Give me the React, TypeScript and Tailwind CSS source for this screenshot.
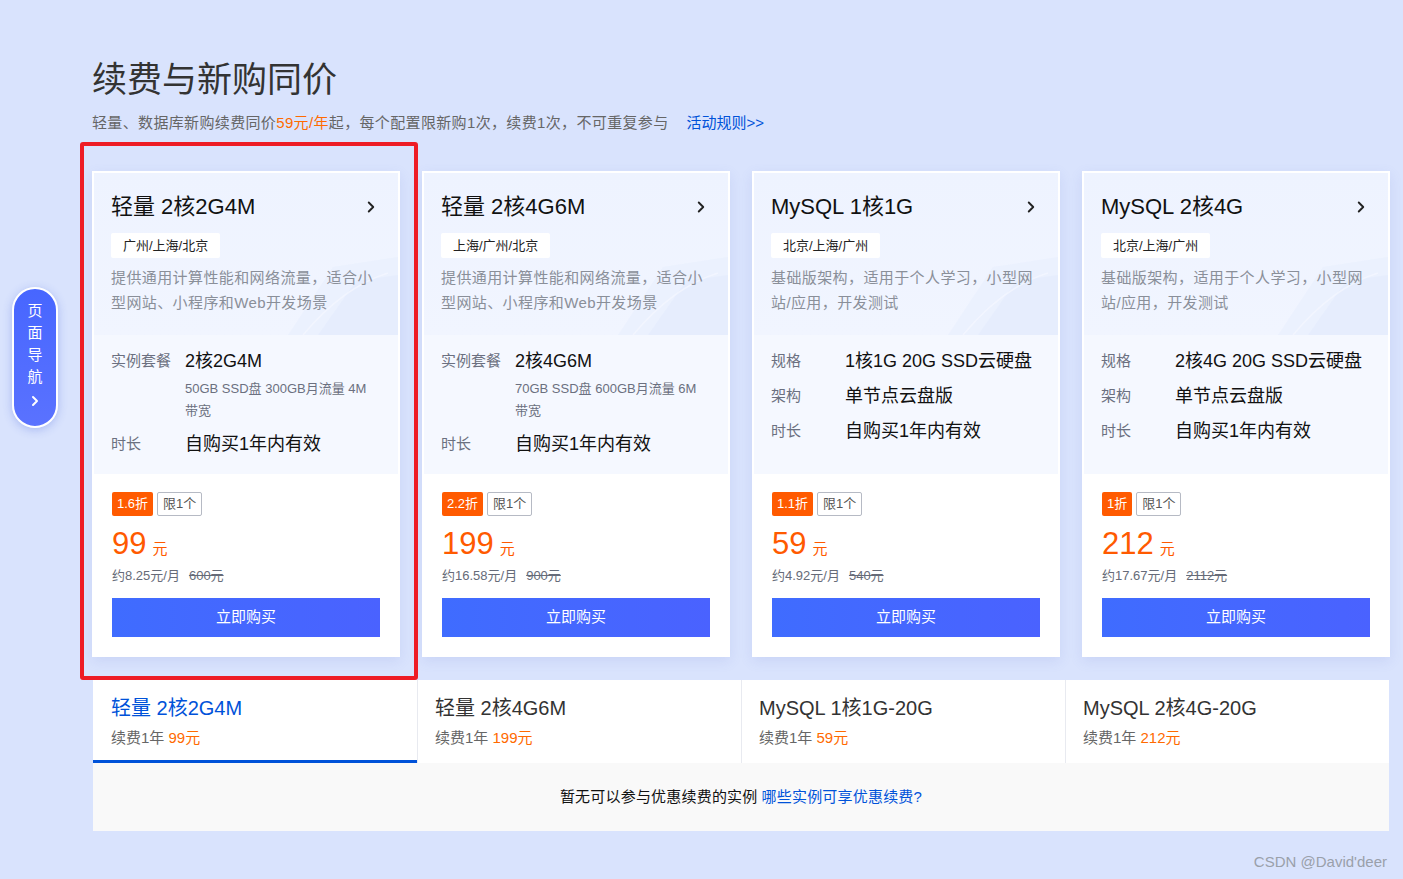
import { ChevronRight } from 'lucide-react';

type Row = { label: string; value: string; sub?: string };

interface Plan {
  name: string;
  regions: string;
  desc: string;
  rows: Row[];
  discount: string;
  price: string;
  monthly: string;
  original: string;
}

const plans: Plan[] = [
  {
    name: '轻量 2核2G4M',
    regions: '广州/上海/北京',
    desc: '提供通用计算性能和网络流量，适合小型网站、小程序和Web开发场景',
    rows: [
      { label: '实例套餐', value: '2核2G4M', sub: '50GB SSD盘 300GB月流量 4M带宽' },
      { label: '时长', value: '自购买1年内有效' },
    ],
    discount: '1.6折',
    price: '99',
    monthly: '约8.25元/月',
    original: '600元',
  },
  {
    name: '轻量 2核4G6M',
    regions: '上海/广州/北京',
    desc: '提供通用计算性能和网络流量，适合小型网站、小程序和Web开发场景',
    rows: [
      { label: '实例套餐', value: '2核4G6M', sub: '70GB SSD盘 600GB月流量 6M带宽' },
      { label: '时长', value: '自购买1年内有效' },
    ],
    discount: '2.2折',
    price: '199',
    monthly: '约16.58元/月',
    original: '900元',
  },
  {
    name: 'MySQL 1核1G',
    regions: '北京/上海/广州',
    desc: '基础版架构，适用于个人学习，小型网站/应用，开发测试',
    rows: [
      { label: '规格', value: '1核1G 20G SSD云硬盘' },
      { label: '架构', value: '单节点云盘版' },
      { label: '时长', value: '自购买1年内有效' },
    ],
    discount: '1.1折',
    price: '59',
    monthly: '约4.92元/月',
    original: '540元',
  },
  {
    name: 'MySQL 2核4G',
    regions: '北京/上海/广州',
    desc: '基础版架构，适用于个人学习，小型网站/应用，开发测试',
    rows: [
      { label: '规格', value: '2核4G 20G SSD云硬盘' },
      { label: '架构', value: '单节点云盘版' },
      { label: '时长', value: '自购买1年内有效' },
    ],
    discount: '1折',
    price: '212',
    monthly: '约17.67元/月',
    original: '2112元',
  },
];

const tabs = [
  { name: '轻量 2核2G4M', price: '99元' },
  { name: '轻量 2核4G6M', price: '199元' },
  { name: 'MySQL 1核1G-20G', price: '59元' },
  { name: 'MySQL 2核4G-20G', price: '212元' },
];

function PlanCard({ plan }: { plan: Plan }) {
  return (
    <div className="flex flex-col border-2 border-white bg-white shadow-[0_4px_12px_rgba(90,110,200,0.12)]">
      {/* Top section */}
      <div className="relative h-[162px] overflow-hidden bg-gradient-to-b from-[#eef3ff] to-[#f1f5ff] px-[17px] pt-[19px]">
        <svg className="absolute right-0 bottom-0" width="120" height="90" viewBox="0 0 120 90" fill="none">
          <path d="M10 90 L55 22 L120 12 L120 90 Z" fill="#e8eefd" opacity="0.6" />
          <path d="M40 90 L78 36 L120 30 L120 90 Z" fill="#e1e8fc" opacity="0.45" />
          <path d="M25 90 Q65 42 110 28" stroke="#f7f9ff" strokeWidth="1.5" opacity="0.6" />
        </svg>
        <div className="relative flex items-center justify-between">
          <div className="text-[22px] leading-[30px] text-[#111]">{plan.name}</div>
          <ChevronRight className="mr-[1px] h-[18px] w-[18px] text-[#222]" strokeWidth={2.5} />
        </div>
        <div className="relative mt-[11px] inline-flex h-[25px] items-center rounded-[2px] bg-white px-[12px] text-[13px] text-[#222]">
          {plan.regions}
        </div>
        <div className="relative mt-[7px] text-[15px] leading-[25px] tracking-[0.4px] text-[#8a8f99]">{plan.desc}</div>
      </div>

      {/* Spec section */}
      <div className="flex h-[139px] flex-col gap-[9px] bg-[#f5f8ff] px-[17px] pt-[13px]">
        {plan.rows.map((row) => (
          <div key={row.label} className="flex">
            <div className="w-[74px] shrink-0 text-[15px] leading-[26px] text-[#6b7080]">{row.label}</div>
            <div className="flex flex-col">
              <div className="text-[18px] leading-[26px] text-[#111]">{row.value}</div>
              {row.sub && (
                <div className="mt-[4px] pr-[8px] text-[13px] leading-[22px] text-[#6b7080]">{row.sub}</div>
              )}
            </div>
          </div>
        ))}
      </div>

      {/* Price section */}
      <div className="flex flex-col bg-white px-[18px] pt-[18px] pb-[18px]">
        <div className="flex items-center gap-[4px]">
          <span className="flex h-[24px] items-center rounded-[2px] bg-[#ff5a00] px-[5px] text-[13px] text-white">
            {plan.discount}
          </span>
          <span className="flex h-[24px] items-center rounded-[2px] border border-[#b6bac4] px-[5px] text-[13px] text-[#555]">
            限1个
          </span>
        </div>
        <div className="mt-[10px] flex items-baseline gap-[6px] text-[#ff5a00]">
          <span className="text-[31px] leading-[36px]">{plan.price}</span>
          <span className="text-[15px]">元</span>
        </div>
        <div className="mt-[4px] flex gap-[9px] text-[13px] leading-[20px] text-[#666b78]">
          <span>{plan.monthly}</span>
          <span className="line-through">{plan.original}</span>
        </div>
        <button className="mt-[12px] h-[39px] w-full bg-gradient-to-r from-[#3f6cff] to-[#4a62ff] text-[15px] text-white">
          立即购买
        </button>
      </div>
    </div>
  );
}

export default function App() {
  return (
    <div
      className="relative min-h-[879px] w-full bg-[#d9e3fd] pt-[55px] pl-[92px]"
      style={{ fontFamily: '"Liberation Sans", "Noto Sans CJK SC", sans-serif' }}
    >
      {/* Header */}
      <h1 className="text-[35px] leading-[50px] text-[#333]">续费与新购同价</h1>
      <p className="mt-[5px] flex text-[15px] leading-[26px] tracking-[0.35px] text-[#666]">
        <span>
          轻量、数据库新购续费同价<span className="text-[#ff6a00]">59元/年</span>起，每个配置限新购1次，续费1次，不可重复参与
        </span>
        <a className="ml-[18px] tracking-normal text-[#0052d9]">活动规则&gt;&gt;</a>
      </p>

      {/* Cards */}
      <div className="mt-[35px] grid w-[1298px] grid-cols-4 gap-[22px]">
        {plans.map((p) => (
          <PlanCard key={p.name} plan={p} />
        ))}
      </div>

      {/* Tabs */}
      <div className="mt-[23px] ml-[1px] w-[1296px]">
        <div className="grid grid-cols-4 bg-white">
          {tabs.map((t, i) => (
            <div
              key={t.name}
              className={
                i === 0
                  ? 'h-[83px] border-b-[3px] border-[#0052d9] pt-[13px] pl-[18px]'
                  : 'h-[83px] border-l border-[#e8eaf0] pt-[13px] pl-[17px]'
              }
            >
              <div className={i === 0 ? 'text-[20px] leading-[30px] text-[#0052d9]' : 'text-[20px] leading-[30px] text-[#333]'}>
                {t.name}
              </div>
              <div className="mt-[1px] text-[15px] leading-[28px] text-[#666]">
                续费1年 <span className="text-[#ff6a00]">{t.price}</span>
              </div>
            </div>
          ))}
        </div>
        <div className="flex h-[68px] items-center justify-center bg-[#f9f9f9] text-[15px] tracking-[0.2px] text-[#111]">
          暂无可以参与优惠续费的实例
          <a className="ml-[4px] text-[#0052d9]">哪些实例可享优惠续费?</a>
        </div>
      </div>

      {/* Floating page nav */}
      <div className="absolute top-[287px] left-[12px] flex h-[141px] w-[46px] flex-col items-center rounded-full border-2 border-white bg-gradient-to-b from-[#4766ff] to-[#5a72ff] pt-[11px] text-[15px] leading-[22px] text-white shadow-[0_2px_10px_rgba(60,90,220,0.3)]">
        <span>页</span>
        <span>面</span>
        <span>导</span>
        <span>航</span>
        <ChevronRight className="mt-[5px] h-[16px] w-[16px]" strokeWidth={3} />
      </div>

      {/* Highlight annotation */}
      <div className="pointer-events-none absolute top-[142px] left-[80px] h-[538px] w-[338px] rounded-[3px] border-[4px] border-[#ee1c25]" />

      {/* Watermark */}
      <div className="absolute right-[16px] bottom-[6px] text-[15px] text-[#9aa0aa]">CSDN @David'deer</div>
    </div>
  );
}
